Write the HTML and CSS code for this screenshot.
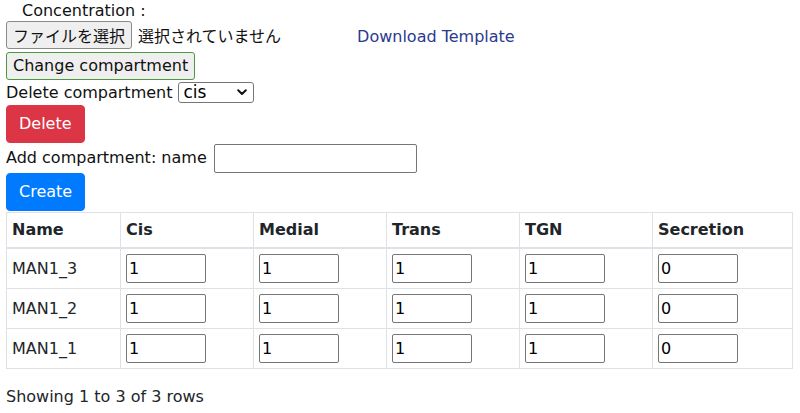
FILE: index.html
```html
<!DOCTYPE html>
<html lang="ja">
<head>
<meta charset="utf-8">
<title>Compartments</title>
<link rel="stylesheet" href="styles.css">
</head>
<body>
<div class="page">
  <div class="conc">Concentration :</div>
  <div class="file-row">
    <span class="file-btn">ファイルを選択</span>
    <span class="file-status">選択されていません</span>
    <a class="dl-link" href="#">Download Template</a>
  </div>
  <div class="change-row"><button class="btn-change">Change compartment</button></div>
  <div class="del-row">
    <span>Delete compartment</span>
    <span class="select"><span class="select-val">cis</span><svg class="chev" width="10" height="7" viewBox="0 0 10 7"><path d="M1.2 1.3 L5 5 L8.8 1.3" fill="none" stroke="#111" stroke-width="2" stroke-linecap="round" stroke-linejoin="round"/></svg></span>
  </div>
  <div class="btn-row"><button class="btn btn-danger">Delete</button></div>
  <div class="add-row">
    <span>Add compartment: name</span>
    <input class="name-input" type="text">
  </div>
  <div class="btn-row"><button class="btn btn-primary">Create</button></div>
  <table class="grid">
    <thead>
      <tr><th class="c-name">Name</th><th class="c-val">Cis</th><th class="c-val">Medial</th><th class="c-val">Trans</th><th class="c-val">TGN</th><th class="c-last">Secretion</th></tr>
    </thead>
    <tbody>
      <tr><td>MAN1_3</td><td><input class="cell-input" value="1"></td><td><input class="cell-input" value="1"></td><td><input class="cell-input" value="1"></td><td><input class="cell-input" value="1"></td><td><input class="cell-input" value="0"></td></tr>
      <tr><td>MAN1_2</td><td><input class="cell-input" value="1"></td><td><input class="cell-input" value="1"></td><td><input class="cell-input" value="1"></td><td><input class="cell-input" value="1"></td><td><input class="cell-input" value="0"></td></tr>
      <tr><td>MAN1_1</td><td><input class="cell-input" value="1"></td><td><input class="cell-input" value="1"></td><td><input class="cell-input" value="1"></td><td><input class="cell-input" value="1"></td><td><input class="cell-input" value="0"></td></tr>
    </tbody>
  </table>
  <div class="info">Showing 1 to 3 of 3 rows</div>
</div>
</body>
</html>
```

FILE: styles.css
```css
* { box-sizing: border-box; }
html, body { margin: 0; padding: 0; background: #fff; }
body {
  font-family: "DejaVu Sans", "Noto Sans CJK JP", sans-serif;
  font-size: 16px;
  line-height: 24px;
  color: #212529;
}
.page { padding: 0 6px; width: 800px; }

.conc { height: 21px; line-height: 21px; padding-left: 16px; color: #111; }

.file-row { display: flex; align-items: center; height: 31px; padding-bottom: 3px; }
.file-btn {
  font-family: "Noto Sans CJK JP", sans-serif;
  height: 28px; line-height: 24px;
  padding: 1px 6px;
  border: 1px solid #8a8a8a; border-radius: 3px;
  background: #efefef; color: #111;
  letter-spacing: 0;
}
.file-status { font-family: "Noto Sans CJK JP", sans-serif; margin-left: 6px; color: #111; }
.dl-link { margin-left: 76px; margin-top: 4px; color: #2b3a8f; text-decoration: none; }

.change-row { height: 28px; }
.btn-change {
  font: inherit; color: #111;
  height: 28px; padding: 1px 6px;
  background: #efefef;
  border: 1px solid #4a9a3d; border-radius: 3px;
}

.del-row { display: flex; align-items: center; height: 25px; gap: 6px; color: #111; }
.select {
  display: flex; align-items: center; justify-content: space-between;
  width: 76px; height: 21px;
  border: 1px solid #767676; border-radius: 3px;
  padding: 0 6px 0 4px;
  line-height: 19px; color: #000; font-size: 17px;
}
.chev { display: block; }

.btn-row { height: 38px; }
.btn {
  font: inherit; line-height: 24px;
  height: 38px; padding: 6px 12px;
  border: 1px solid transparent; border-radius: 4px;
  color: #fff;
}
.btn-danger { background: #dc3545; border-color: #dc3545; }
.btn-primary { background: #007bff; border-color: #007bff; }

.add-row { display: flex; align-items: center; height: 30px; gap: 7px; color: #111; }
.name-input {
  width: 203px; height: 29px;
  border: 1px solid #767676; border-radius: 2px;
  font: inherit; padding: 1px 2px;
}

.grid {
  margin-top: 1px;
  width: 787px;
  border-collapse: collapse;
  table-layout: fixed;
  border: 1px solid #dee2e6;
}
.grid th, .grid td {
  border: 1px solid #dee2e6;
  padding: 5px;
  text-align: left;
  vertical-align: middle;
}
.grid th { font-weight: bold; border-bottom: 2px solid #dee2e6; }
.c-name { width: 114px; }
.c-val { width: 133px; }
.grid td { height: 40px; }
.cell-input {
  display: block;
  width: 80px; height: 29px;
  border: 1px solid #767676; border-radius: 2px;
  font: inherit; color: #000;
  padding: 1px 2px;
}

.info { margin-top: 16px; color: #212529; }
```
